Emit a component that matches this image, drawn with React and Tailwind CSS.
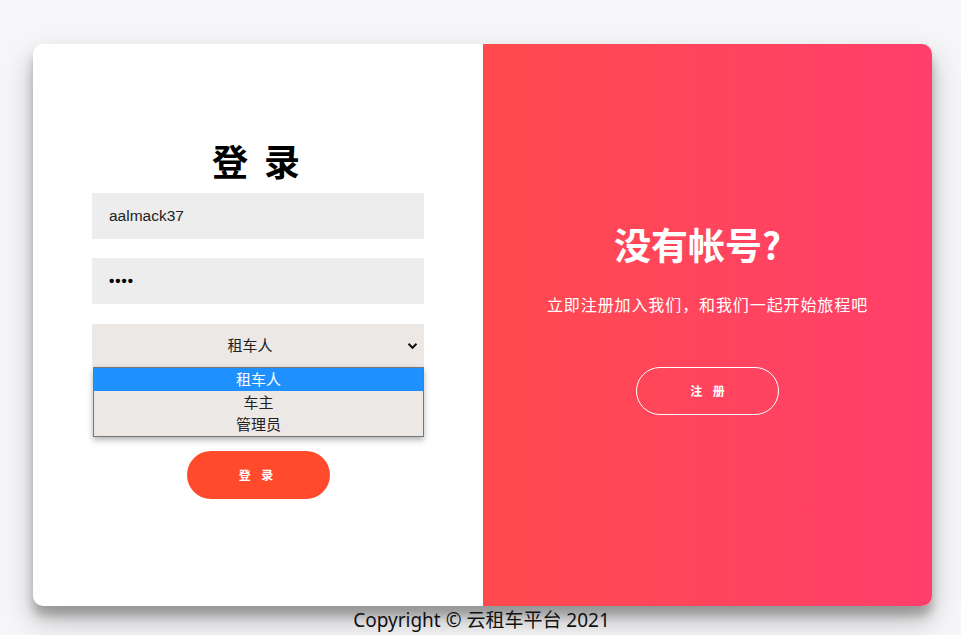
export default function App() {
  return (
    <div className="relative w-full h-[635px] bg-[#f6f5f7] overflow-hidden">
      <div className="flex justify-center pt-[44px] pl-[4px]">
        <div className="relative flex w-[899px] h-[562px] rounded-[10px] overflow-hidden bg-white shadow-[0_14px_28px_rgba(0,0,0,0.25),0_10px_10px_rgba(0,0,0,0.22)]">
          {/* Left: login */}
          <div className="w-[450px] h-full flex flex-col items-center pt-[92px] font-['Liberation_Sans','Noto_Sans_CJK_SC',sans-serif]">
            <h1 className="text-[36px] leading-[48px] font-bold text-black tracking-[4px] font-['Noto_Sans_CJK_SC',sans-serif]">登 录</h1>
            <div className="w-[332px] h-[46px] mt-[9px] bg-[#eeeded] flex items-center px-[17px] text-[15.5px] text-[#222]">aalmack37</div>
            <div className="w-[332px] h-[46px] mt-[19px] bg-[#eeeded] flex items-center px-[17px] text-[15px] text-black font-bold tracking-[1px]">••••</div>
            <div className="relative w-[332px] mt-[20px]">
              <div className="relative w-[332px] h-[43px] bg-[#ebe8e6] flex items-center justify-center pr-[16px] text-[15px] text-[#222] font-['Noto_Sans_CJK_SC',sans-serif]">
                租车人
                <svg className="absolute right-[6px] top-[18px]" width="11" height="8" viewBox="0 0 11 8">
                  <path d="M1.5 1.8 L5.5 5.8 L9.5 1.8" fill="none" stroke="#111" strokeWidth="2" />
                </svg>
              </div>
              <div className="absolute left-[1px] top-[43px] w-[331px] border border-[#767676] bg-[#ebe8e6] shadow-[0_3px_6px_rgba(0,0,0,0.3)] text-[15px] leading-[22.5px] text-[#222] text-center font-['Noto_Sans_CJK_SC',sans-serif] z-10">
                <div className="bg-[#1e90ff] text-white">租车人</div>
                <div>车主</div>
                <div>管理员</div>
              </div>
            </div>
            <button className="mt-[84px] w-[143px] h-[48px] rounded-full bg-[#ff4b2b] text-white text-[12px] font-bold tracking-[4px] font-['Noto_Sans_CJK_SC',sans-serif]">登 录</button>
          </div>
          {/* Right: register */}
          <div className="w-[449px] h-full bg-gradient-to-r from-[#ff4a4d] to-[#ff3f6b] flex flex-col items-center pt-[170px] text-white font-['Noto_Sans_CJK_SC',sans-serif]">
            <h1 className="text-[37px] leading-[60px] font-bold pr-[20px]">没有帐号?</h1>
            <p className="mt-[20px] text-[16px] leading-[20px] tracking-[0.9px]">立即注册加入我们，和我们一起开始旅程吧</p>
            <button className="mt-[53px] w-[143px] h-[48px] rounded-full border border-white text-white text-[12px] font-bold tracking-[4px] pl-[4px]">注 册</button>
          </div>
        </div>
      </div>
      <div className="absolute left-[2px] right-0 top-[606px] text-center text-[19px] leading-[28px] text-[#111] font-['Noto_Sans','Noto_Sans_CJK_SC',sans-serif]">
        Copyright © 云租车平台 2021
      </div>
    </div>
  );
}
